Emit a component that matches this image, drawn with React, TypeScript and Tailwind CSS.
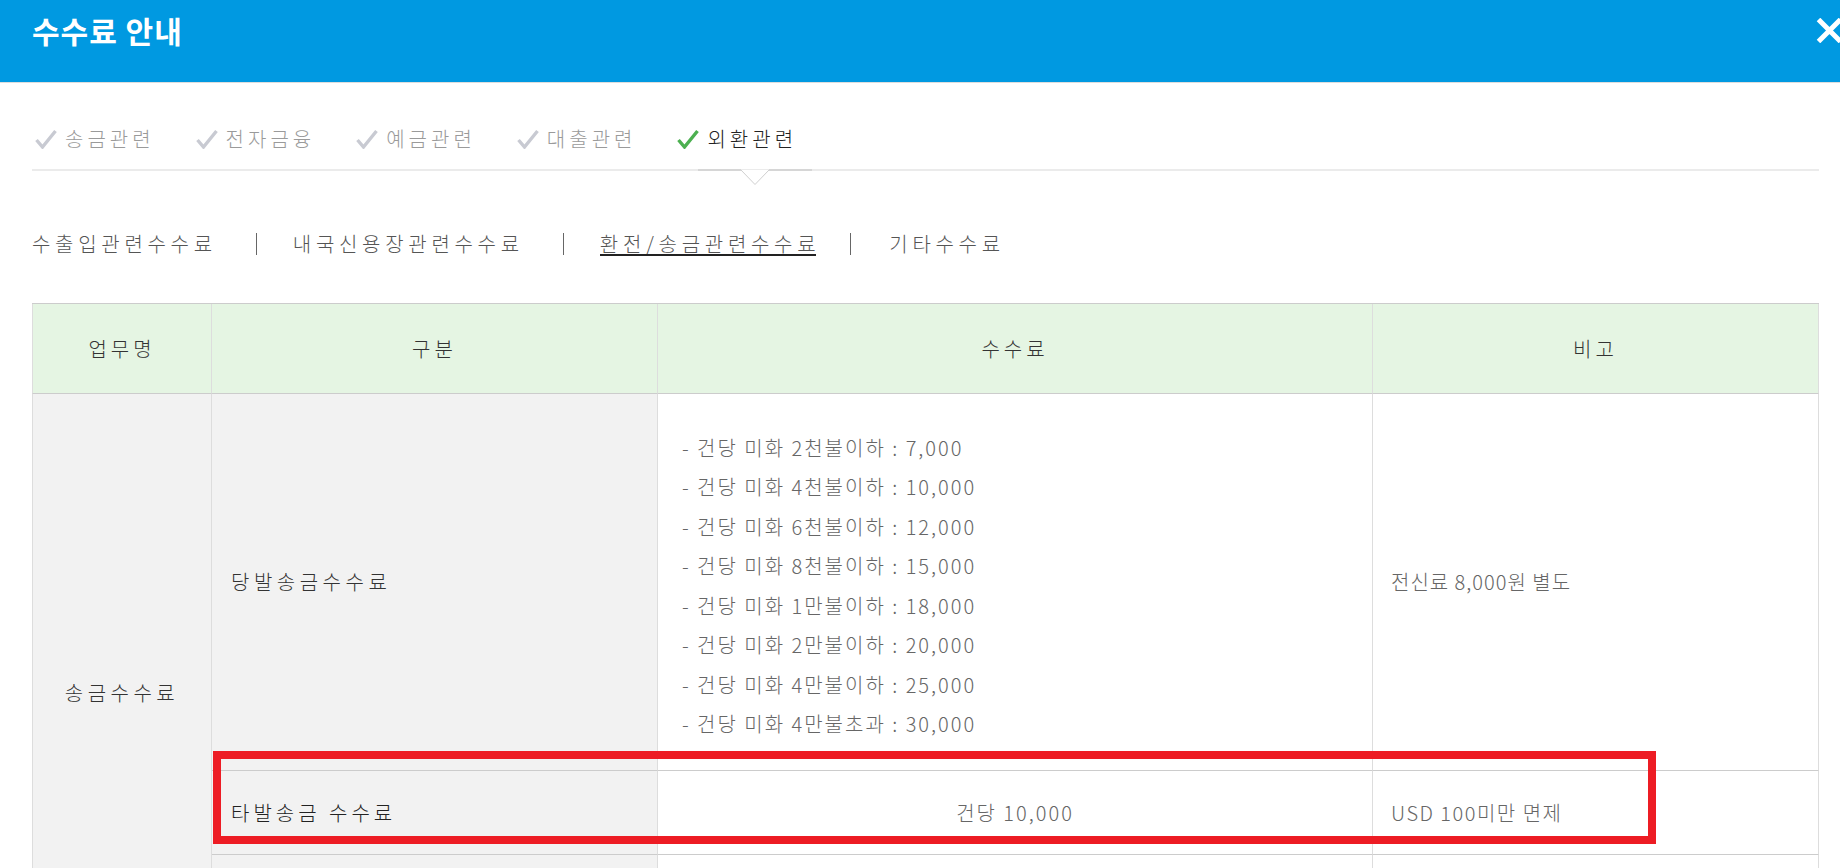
import React from "react";

const Check = ({ active }: { active?: boolean }) => (
  <svg width="22" height="20" viewBox="0 0 22 20" className="shrink-0">
    <path
      d="M1.5 11 L7.5 18 L20.5 2"
      fill="none"
      stroke={active ? "#4cb050" : "#c8cad2"}
      strokeWidth="3.4"
      strokeLinejoin="miter"
    />
  </svg>
);

const tabs = ["송금관련", "전자금융", "예금관련", "대출관련", "외환관련"];

const fees = [
  "- 건당 미화 2천불이하 : 7,000",
  "- 건당 미화 4천불이하 : 10,000",
  "- 건당 미화 6천불이하 : 12,000",
  "- 건당 미화 8천불이하 : 15,000",
  "- 건당 미화 1만불이하 : 18,000",
  "- 건당 미화 2만불이하 : 20,000",
  "- 건당 미화 4만불이하 : 25,000",
  "- 건당 미화 4만불초과 : 30,000",
];

export default function App() {
  return (
    <div className="h-[868px] w-[1840px] overflow-hidden bg-white font-['Noto_Sans_CJK_KR','Noto_Sans',sans-serif]">
      {/* Header */}
      <div className="relative h-[83px] overflow-hidden border-b border-b-[#dddddd] bg-[#0099e1]">
        <div className="pl-[32px] pt-[10px] text-[30px] font-bold leading-[40px] tracking-[1px] text-white">
          수수료 안내
        </div>
        <svg
          className="absolute left-[1816px] top-[18px]"
          width="27"
          height="25"
          viewBox="0 0 27 25"
        >
          <path d="M2.5 1.5 L24.5 23.5 M24.5 1.5 L2.5 23.5" stroke="#ffffff" strokeWidth="5" fill="none" />
        </svg>
      </div>

      <div className="pl-[32px] pr-[21px] font-light">
        {/* Main tabs */}
        <div className="relative border-b-2 border-b-[#ebebeb] pb-[15px] pt-[41px]">
          <div className="flex h-[30px] items-center gap-[41px] pl-[3px] text-[20px] tracking-[4px]">
            {tabs.map((t, i) => {
              const active = i === tabs.length - 1;
              return (
                <div key={t} className="flex items-center gap-[8px]">
                  <Check active={active} />
                  <span className={active ? "text-[#222222]" : "text-[#9a9a9a]"}>{t}</span>
                </div>
              );
            })}
          </div>
          <div className="absolute bottom-[-2px] left-[666px] h-[2px] w-[114px] bg-[#d6d6d6]" />
          <svg className="absolute left-[708px] top-full" width="30" height="17" viewBox="0 0 30 17">
            <polyline points="0.5,0.5 15,15.5 29.5,0.5" fill="#ffffff" stroke="#cfcfcf" strokeWidth="1" />
          </svg>
        </div>

        {/* Sub tabs */}
        <div className="mt-[58px] flex h-[30px] items-center text-[20px] tracking-[4.7px] text-[#555555]">
          <span className="leading-[30px]">수출입관련수수료</span>
          <span className="ml-[39px] mr-[36px] h-[22px] w-px bg-[#666666]" />
          <span className="leading-[30px]">내국신용장관련수수료</span>
          <span className="ml-[39px] mr-[36px] h-[22px] w-px bg-[#666666]" />
          <span className="relative leading-[30px]">
            환전/송금관련수수료
            <span className="absolute left-0 right-[4px] top-[25px] h-[2px] bg-[#222222]" />
          </span>
          <span className="ml-[30px] mr-[38px] h-[22px] w-px bg-[#666666]" />
          <span className="leading-[30px]">기타수수료</span>
        </div>

        {/* Table */}
        <div className="relative mt-[44px] grid w-[1787px] grid-cols-[180px_446px_715px_446px] grid-rows-[90px_377px_84px_137px] border-t border-t-[#cccccc] text-[20px]">
          {/* col1 body cell (explicitly placed) */}
          <div className="col-start-1 row-span-3 row-start-2 flex items-center justify-center border-b border-l border-r border-b-[#cccccc] border-l-[#dddddd] border-r-[#dddddd] bg-[#f2f2f2] tracking-[4.5px] text-[#333333]">
            송금수수료
          </div>

          {/* Header */}
          <div className="flex items-center justify-center border-b border-l border-r border-b-[#cccccc] border-l-[#dddddd] border-r-[#dddddd] bg-[#e5f5e3] tracking-[4px] text-[#333333]">
            업무명
          </div>
          <div className="flex items-center justify-center border-b border-r border-b-[#cccccc] border-r-[#dddddd] bg-[#e5f5e3] tracking-[4px] text-[#333333]">
            구분
          </div>
          <div className="flex items-center justify-center border-b border-r border-b-[#cccccc] border-r-[#dddddd] bg-[#e5f5e3] tracking-[4px] text-[#333333]">
            수수료
          </div>
          <div className="flex items-center justify-center border-b border-r border-b-[#cccccc] border-r-[#dddddd] bg-[#e5f5e3] tracking-[4px] text-[#333333]">
            비고
          </div>

          {/* Row 1 */}
          <div className="flex items-center border-b border-r border-b-[#cccccc] border-r-[#dddddd] bg-[#f2f2f2] pl-[19px] tracking-[4.5px] text-[#333333]">
            당발송금수수료
          </div>
          <div className="flex flex-col justify-center border-b border-r border-b-[#cccccc] border-r-[#dddddd] pl-[24px] pt-[7px] tracking-[2px] text-[#666666]">
            {fees.map((f) => (
              <div key={f} className="leading-[39.5px]">
                {f}
              </div>
            ))}
          </div>
          <div className="flex items-center border-b border-r border-b-[#cccccc] border-r-[#dddddd] pl-[18px] tracking-[1px] text-[#666666]">
            전신료 8,000원 별도
          </div>

          {/* Row 2 */}
          <div className="flex items-center border-b border-r border-b-[#cccccc] border-r-[#dddddd] bg-[#f2f2f2] pl-[19px] tracking-[4px] text-[#222222]">
            타발송금 수수료
          </div>
          <div className="flex items-center justify-center border-b border-r border-b-[#cccccc] border-r-[#dddddd] tracking-[2px] text-[#666666]">
            건당 10,000
          </div>
          <div className="flex items-center border-b border-r border-b-[#cccccc] border-r-[#dddddd] pl-[18px] tracking-[1.5px] text-[#666666]">
            USD 100미만 면제
          </div>

          {/* Row 3 */}
          <div className="border-b border-r border-b-[#cccccc] border-r-[#dddddd] bg-[#f2f2f2]" />
          <div className="border-b border-r border-b-[#cccccc] border-r-[#dddddd]" />
          <div className="border-b border-r border-b-[#cccccc] border-r-[#dddddd]" />

          {/* Red highlight box */}
          <div className="absolute left-[181px] top-[447px] h-[93px] w-[1443px] border-8 border-[#ed1c24]" />
        </div>
      </div>
    </div>
  );
}
